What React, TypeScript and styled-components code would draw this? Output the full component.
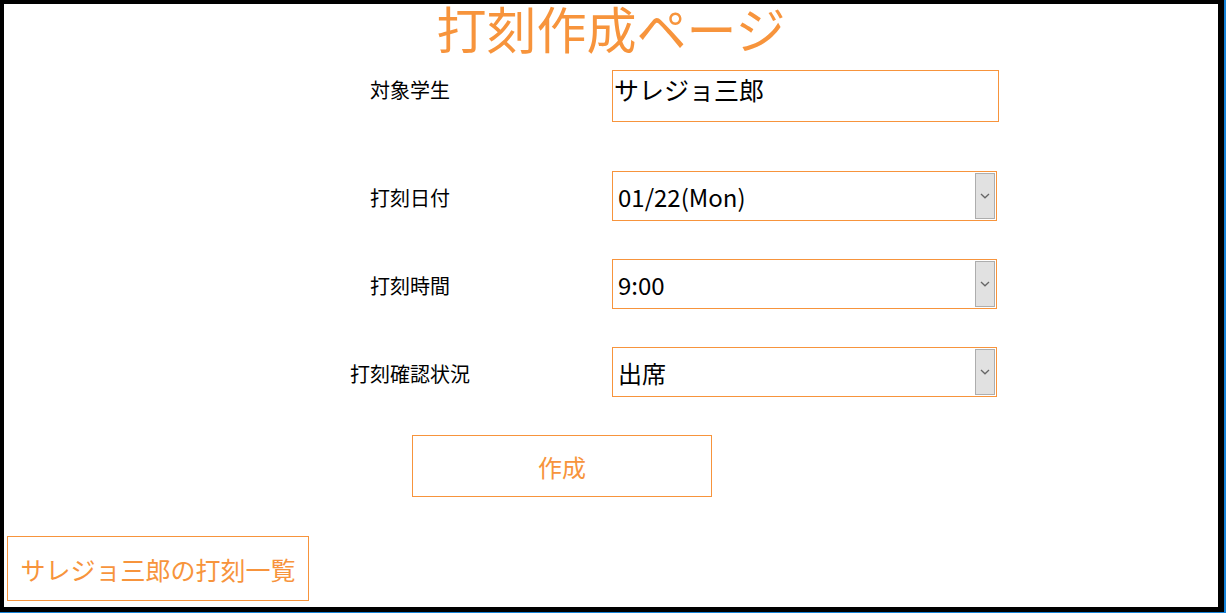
import styled, { createGlobalStyle } from "styled-components";

const ORANGE = "#f7943c";
const FONT = `"Noto Sans CJK JP", "Noto Sans", sans-serif`;

const GlobalStyle = createGlobalStyle`
  html, body {
    margin: 0;
    padding: 0;
    background: #1683d8;
  }
  body {
    font-family: ${FONT};
  }
`;

const Frame = styled.div`
  width: 1224px;
  height: 612px;
  box-sizing: border-box;
  background: #000;
  padding: 4px 6px 5px 4px;
`;

const Panel = styled.main`
  height: 100%;
  background: #fff;
  padding: 0 3px;
  box-sizing: border-box;
  display: flex;
  flex-direction: column;
`;

const Title = styled.h1`
  margin: -3px 0 0 0;
  font-size: 50px;
  line-height: 52px;
  font-weight: 400;
  color: ${ORANGE};
  text-align: center;
`;

const Form = styled.form`
  margin: 17px 0 0 0;
  display: flex;
  flex-direction: column;
`;

const Row = styled.div<{ $gap: number; $top?: boolean }>`
  display: grid;
  grid-template-columns: 402px 387px;
  padding-left: 203px;
  margin-top: ${(p) => p.$gap}px;
  align-items: ${(p) => (p.$top ? "start" : "center")};
`;

const Label = styled.label<{ $offset?: number }>`
  font-size: 20px;
  line-height: 24px;
  color: #000;
  text-align: center;
  padding-top: ${(p) => p.$offset ?? 0}px;
  padding-right: 2px;
`;

const TextField = styled.input`
  box-sizing: border-box;
  width: 387px;
  height: 52px;
  border: 1px solid ${ORANGE};
  padding: 0 0 14px 1px;
  margin: 0;
  font-family: ${FONT};
  font-size: 25px;
  color: #000;
  outline: none;
  background: #fff;
`;

const SelectFrame = styled.div`
  box-sizing: border-box;
  width: 385px;
  height: 50px;
  border: 1px solid ${ORANGE};
  display: flex;
  padding: 1px 1px 1px 0;
  background: #fff;
`;

const NativeSelect = styled.select`
  appearance: none;
  flex: 1;
  min-width: 0;
  border: none;
  outline: none;
  background: transparent;
  padding: 0 0 0 5px;
  margin: 0;
  font-family: ${FONT};
  font-size: 24px;
  color: #000;
`;

const ArrowBox = styled.span`
  width: 20px;
  box-sizing: border-box;
  border: 1px solid #adadad;
  background: #e1e1e1;
  display: flex;
  align-items: center;
  justify-content: center;
`;

const OutlineButton = styled.button<{ $w: number; $h: number }>`
  box-sizing: border-box;
  align-self: flex-start;
  width: ${(p) => p.$w}px;
  height: ${(p) => p.$h}px;
  border: 1px solid ${ORANGE};
  background: #fff;
  color: ${ORANGE};
  font-family: ${FONT};
  font-size: 25px;
  padding: 0;
  cursor: pointer;
`;

const CreateButton = styled(OutlineButton)`
  margin: 38px 0 0 405px;
  font-size: 24px;
`;

const ListButton = styled(OutlineButton)`
  margin-top: 39px;
  white-space: nowrap;
`;

function Chevron() {
  return (
    <svg width="10" height="6" viewBox="0 0 10 6">
      <path d="M1 1 L5 4.8 L9 1" fill="none" stroke="#666" strokeWidth="1.3" />
    </svg>
  );
}

function Dropdown({ value, options }: { value: string; options: string[] }) {
  return (
    <SelectFrame>
      <NativeSelect defaultValue={value}>
        {options.map((o) => (
          <option key={o}>{o}</option>
        ))}
      </NativeSelect>
      <ArrowBox>
        <Chevron />
      </ArrowBox>
    </SelectFrame>
  );
}

export default function App() {
  return (
    <>
      <GlobalStyle />
      <Frame>
        <Panel>
          <Title>打刻作成ページ</Title>
          <Form onSubmit={(e) => e.preventDefault()}>
            <Row $gap={0} $top>
              <Label $offset={8}>対象学生</Label>
              <TextField defaultValue="サレジョ三郎" />
            </Row>
            <Row $gap={49}>
              <Label $offset={4}>打刻日付</Label>
              <Dropdown value="01/22(Mon)" options={["01/22(Mon)", "01/23(Tue)", "01/24(Wed)"]} />
            </Row>
            <Row $gap={38}>
              <Label $offset={4}>打刻時間</Label>
              <Dropdown value="9:00" options={["9:00", "10:40", "13:10", "14:50"]} />
            </Row>
            <Row $gap={38}>
              <Label $offset={4}>打刻確認状況</Label>
              <Dropdown value="出席" options={["出席", "遅刻", "欠席"]} />
            </Row>
          </Form>
          <CreateButton type="button" $w={300} $h={62}>
            作成
          </CreateButton>
          <ListButton type="button" $w={302} $h={65}>
            サレジョ三郎の打刻一覧
          </ListButton>
        </Panel>
      </Frame>
    </>
  );
}
